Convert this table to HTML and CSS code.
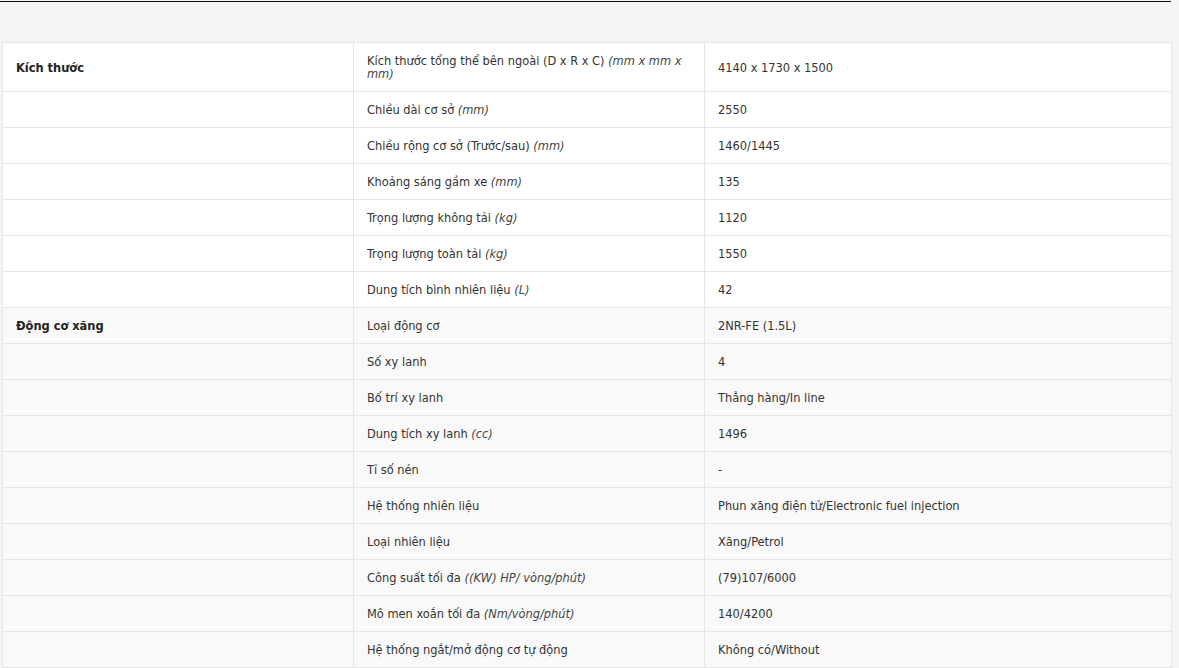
FILE: index.html
```html
<!DOCTYPE html>
<html lang="vi">
<head>
    <meta charset="UTF-8">
    <meta name="viewport" content="width=device-width, initial-scale=1.0">
    <title>Thông số kỹ thuật</title>
    <link rel="stylesheet" href="styles.css">
</head>
<body>

<div class="page">
    <div class="top-line"></div>

    <table class="spec-table">
        <colgroup>
            <col class="col-group">
            <col class="col-name">
            <col class="col-value">
        </colgroup>

        <!-- Kích thước -->
        <tbody class="spec-white">
            <tr>
                <td class="group">Kích thước</td>
                <td>Kích thước tổng thể bên ngoài (D x R x C) <em>(mm x mm x mm)</em></td>
                <td>4140 x 1730 x 1500</td>
            </tr>
            <tr>
                <td></td>
                <td>Chiều dài cơ sở <em>(mm)</em></td>
                <td>2550</td>
            </tr>
            <tr>
                <td></td>
                <td>Chiều rộng cơ sở (Trước/sau) <em>(mm)</em></td>
                <td>1460/1445</td>
            </tr>
            <tr>
                <td></td>
                <td>Khoảng sáng gầm xe <em>(mm)</em></td>
                <td>135</td>
            </tr>
            <tr>
                <td></td>
                <td>Trọng lượng không tải <em>(kg)</em></td>
                <td>1120</td>
            </tr>
            <tr>
                <td></td>
                <td>Trọng lượng toàn tải <em>(kg)</em></td>
                <td>1550</td>
            </tr>
            <tr>
                <td></td>
                <td>Dung tích bình nhiên liệu <em>(L)</em></td>
                <td>42</td>
            </tr>
        </tbody>

        <!-- Động cơ xăng -->
        <tbody class="spec-grey">
            <tr>
                <td class="group">Động cơ xăng</td>
                <td>Loại động cơ</td>
                <td>2NR-FE (1.5L)</td>
            </tr>
            <tr>
                <td></td>
                <td>Số xy lanh</td>
                <td>4</td>
            </tr>
            <tr>
                <td></td>
                <td>Bố trí xy lanh</td>
                <td>Thẳng hàng/In line</td>
            </tr>
            <tr>
                <td></td>
                <td>Dung tích xy lanh <em>(cc)</em></td>
                <td>1496</td>
            </tr>
            <tr>
                <td></td>
                <td>Tỉ số nén</td>
                <td>-</td>
            </tr>
            <tr>
                <td></td>
                <td>Hệ thống nhiên liệu</td>
                <td>Phun xăng điện tử/Electronic fuel injection</td>
            </tr>
            <tr>
                <td></td>
                <td>Loại nhiên liệu</td>
                <td>Xăng/Petrol</td>
            </tr>
            <tr>
                <td></td>
                <td>Công suất tối đa <em>((KW) HP/ vòng/phút)</em></td>
                <td>(79)107/6000</td>
            </tr>
            <tr>
                <td></td>
                <td>Mô men xoắn tối đa <em>(Nm/vòng/phút)</em></td>
                <td>140/4200</td>
            </tr>
            <tr>
                <td></td>
                <td>Hệ thống ngắt/mở động cơ tự động</td>
                <td>Không có/Without</td>
            </tr>
        </tbody>
    </table>
</div>

</body>
</html>
```

FILE: styles.css
```css
body {
    margin: 0;
    background-color: #f4f4f4;
    font-family: "DejaVu Sans Condensed", "DejaVu Sans", sans-serif;
    font-size: 12.7px;
    color: #333;
}
.page {
    width: 1171px;
}
.top-line {
    height: 1px;
    margin-top: 1px;
    background-color: #111;
}
.spec-table {
    width: 1170px;
    margin: 40px 0 0 2px;
    border-collapse: collapse;
    table-layout: fixed;
}
.col-group {
    width: 351px;
}
.col-name {
    width: 351px;
}
.spec-table td {
    padding: 11px 14px 11px 13px;
    line-height: 13px;
    border: 1px solid #e6e6e6;
    vertical-align: top;
}
.spec-table td.group {
    vertical-align: middle;
    font-weight: bold;
    color: #222;
}
.spec-table tbody.spec-white td {
    background-color: #fff;
}
.spec-table tbody.spec-grey td {
    background-color: #f9f9f9;
}
.spec-table tr:first-child td:nth-child(3) {
    vertical-align: middle;
}
.spec-table em {
    color: #444;
}
```
